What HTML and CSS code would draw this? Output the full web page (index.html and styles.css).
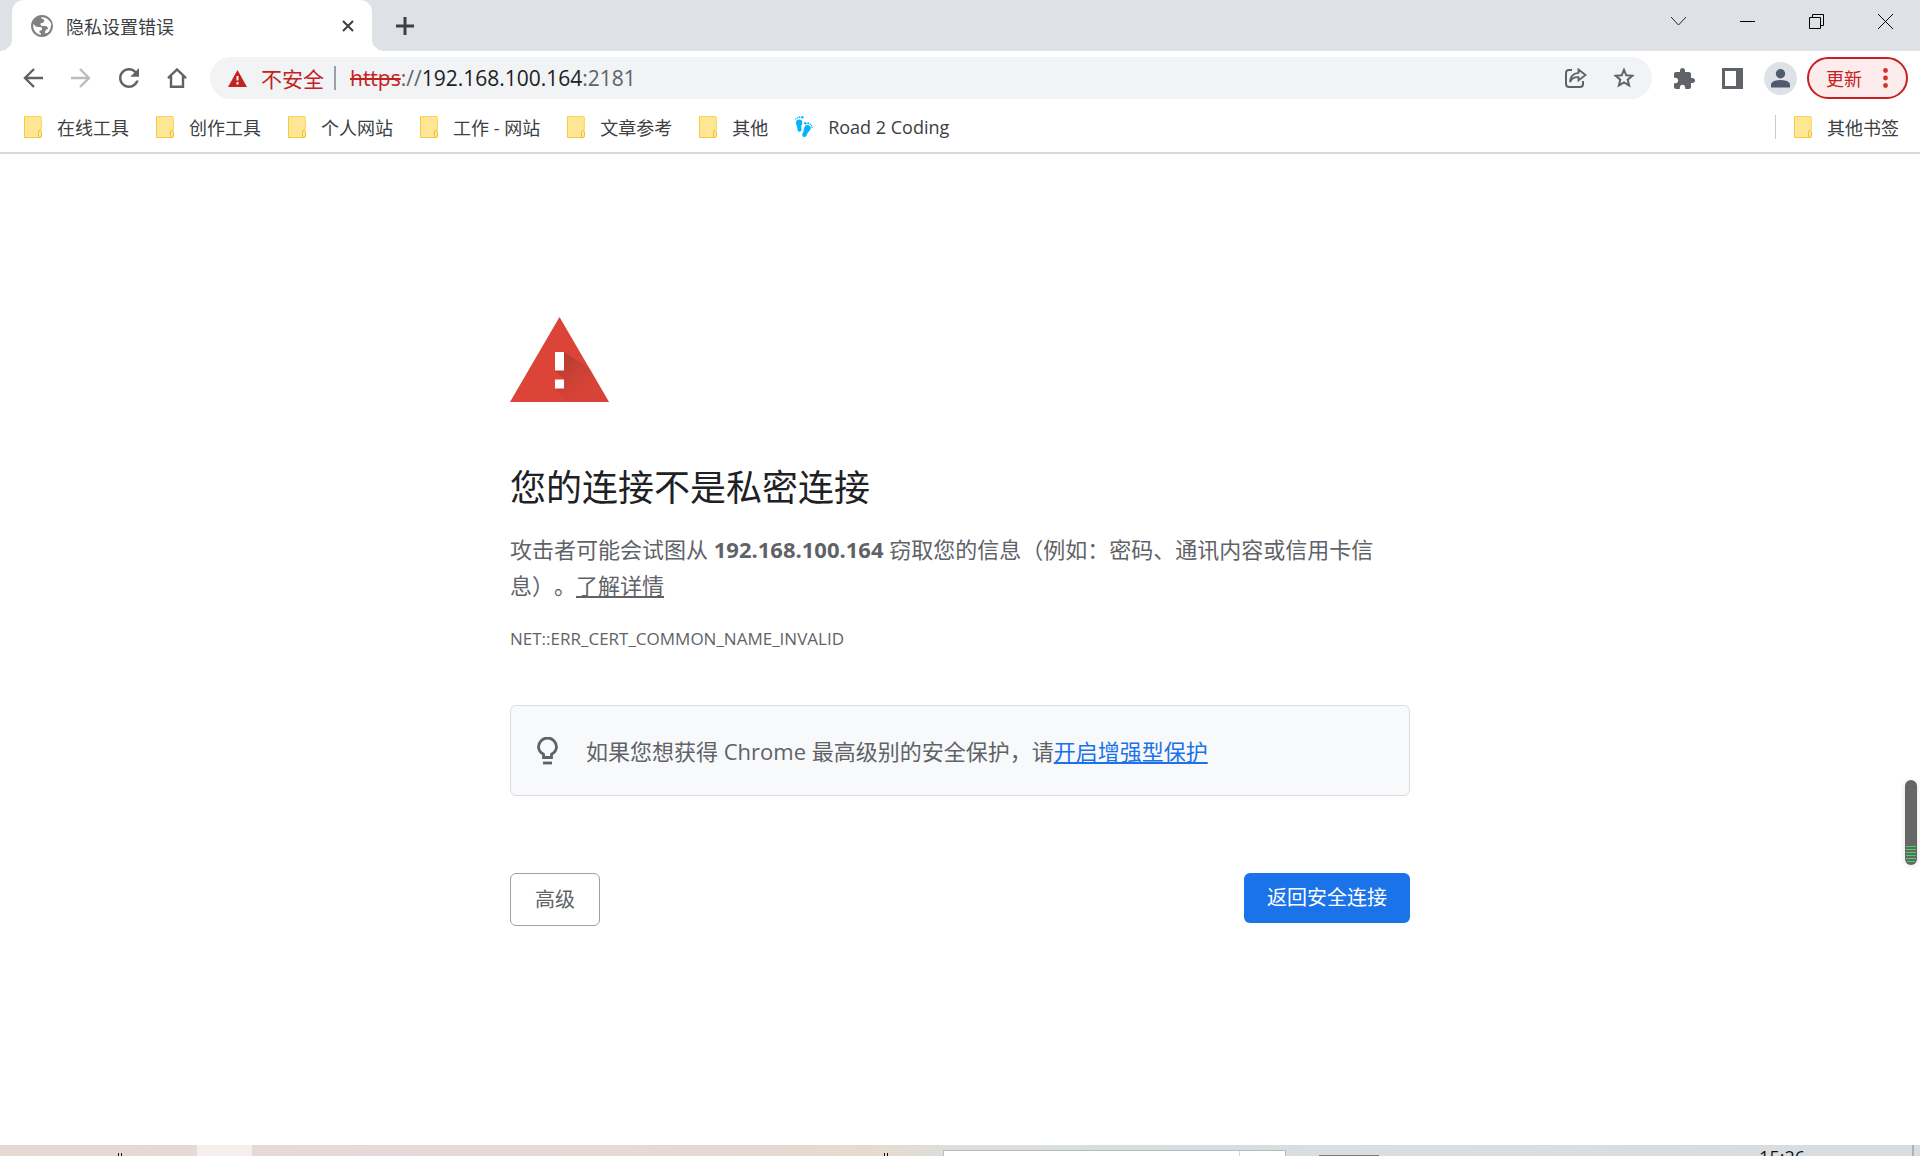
FILE: index.html
```html
<!DOCTYPE html>
<html lang="zh-CN">
<head>
    <meta charset="UTF-8">
    <meta name="viewport" content="width=device-width, initial-scale=1.0">
    <title>隐私设置错误</title>
    <link rel="stylesheet" href="styles.css">
</head>
<body>

    <!-- Shared icons -->
    <svg class="defs" aria-hidden="true">
        <symbol id="folder" viewBox="0 0 18 22">
            <path d="M.5 .5h16q.8 0 .8.8v12.4q-2.3.2-2.3 2.3v4.6q0 .9-1 .9H.5z" fill="#ffe694" stroke="#f8d554"/>
            <path d="M.5 1v20.5H16" fill="none" stroke="#f3cb45"/>
            <path d="M14.5 21.5v-5.2q0-1.8 1.5-1.8t1.5 1.8v3.7q0 1.5-1.5 1.5z" fill="#ffe694" stroke="#eec03a"/>
        </symbol>
    </svg>

    <!-- Tab Strip -->
    <header class="tab-strip">
        <div class="tab">
            <svg class="favicon" viewBox="2 2 20 20"><path fill="#808080" d="M12 2C6.48 2 2 6.48 2 12s4.48 10 10 10 10-4.48 10-10S17.52 2 12 2zm-1 17.93c-3.95-.49-7-3.85-7-7.93 0-.62.08-1.21.21-1.79L5.5 11.5Q6.5 13 9 13h1.5q1.5 0 1.5 1.500T11 16h-.5q-1 0-1 1.200T11 18.500zm6.900-2.540Q17 18.500 15 18.500q-1-.5 0-2t2.500-2q0-2-2-2.500H12q-1.500-.3-1.500-1.500T12 9h1q1.200-.5 1-2-.2-1.500-2-1.500l-1-1.400q4.500-.5 7.500 3T20 12c0 2.080-.8 3.970-2.100 5.390z"/></svg>
            <span class="tab-title">隐私设置错误</span>
            <button class="tab-close" aria-label="关闭标签页">
                <svg width="12" height="12" viewBox="0 0 12 12"><path d="M1 1l10 10M11 1L1 11" stroke="#3c4043" stroke-width="2"/></svg>
            </button>
        </div>
        <button class="new-tab" aria-label="新标签页">
            <svg width="18" height="18" viewBox="0 0 18 18"><path d="M9 0v18M0 9h18" stroke="#3c4043" stroke-width="3"/></svg>
        </button>
        <div class="window-controls">
            <button aria-label="搜索标签页"><svg width="15" height="15" viewBox="0 0 15 15"><path d="M0 3l7.500 8L15 3" fill="none" stroke="#222"/></svg></button>
            <button aria-label="最小化"><svg width="15" height="15" viewBox="0 0 15 15"><path d="M0 7.500h15" stroke="#000"/></svg></button>
            <button aria-label="还原"><svg width="15" height="15" viewBox="0 0 15 15"><path d="M.5 3.500h11v11H.5zM3.500 3.500v-3h11v11h-3" fill="none" stroke="#000"/></svg></button>
            <button aria-label="关闭"><svg width="15" height="15" viewBox="0 0 15 15"><path d="M0 0l15 15M15 0L0 15" stroke="#000"/></svg></button>
        </div>
    </header>

    <!-- Toolbar -->
    <nav class="toolbar">
        <button class="icon-btn" aria-label="返回"><svg width="20" height="20" viewBox="0 0 20 20"><path d="M20 10H2M11 1l-9 9 9 9" fill="none" stroke="#5f6368" stroke-width="2.400"/></svg></button>
        <button class="icon-btn" aria-label="前进"><svg width="20" height="20" viewBox="0 0 20 20"><path d="M0 10h18M9 1l9 9-9 9" fill="none" stroke="#babcbe" stroke-width="2.400"/></svg></button>
        <button class="icon-btn" aria-label="重新加载"><svg width="20" height="20" viewBox="4 4 16 16"><path fill="#5f6368" d="M17.650 6.350C16.200 4.900 14.210 4 12 4c-4.420 0-7.990 3.580-7.990 8s3.570 8 7.990 8c3.730 0 6.840-2.550 7.730-6h-2.080c-.82 2.330-3.040 4-5.650 4-3.310 0-6-2.690-6-6s2.690-6 6-6c1.660 0 3.140.69 4.220 1.780L13 11h7V4z"/></svg></button>
        <button class="icon-btn" aria-label="主页"><svg width="20" height="20" viewBox="0 0 20 20"><path d="M1 10.200L10 1.500l9 8.700M4 8v10.700h12V8" fill="none" stroke="#5f6368" stroke-width="2.400"/></svg></button>

        <div class="omnibox">
            <button class="security">
                <svg width="19" height="17" viewBox="0 0 19 17"><path fill="#c5221f" d="M9.500 0L19 17H0z"/><path d="M9.500 6v4.500M9.500 12v2.500" stroke="#f1f3f4" stroke-width="2"/></svg>
                不安全
            </button>
            <div class="url" role="textbox" aria-label="地址和搜索栏" tabindex="0"><s>https</s>://<b>192.168.100.164</b>:2181</div>
            <button class="icon-btn" aria-label="分享"><svg width="22" height="20" viewBox="0 0 22 20"><path d="M7 2H4Q1 2 1 5v11q0 3 3 3h11q3 0 3-3v-3" fill="none" stroke="#5f6368" stroke-width="2"/><path d="M13.500 1.500L20.500 7l-7 5.500V9.200Q7.500 8.700 5 14q.3-8.500 8.500-9.200z" fill="none" stroke="#5f6368" stroke-width="1.800"/></svg></button>
            <button class="icon-btn" aria-label="收藏"><svg width="22" height="22" viewBox="0 0 22 22"><path fill="none" stroke="#5f6368" stroke-width="2" d="M11 2.800l2.300 5.500 6 .5-4.600 3.900 1.400 5.800-5.100-3.100-5.100 3.100 1.400-5.800-4.600-3.900 6-.5z"/></svg></button>
        </div>

        <button class="icon-btn" aria-label="扩展程序"><svg width="21" height="21" viewBox="2 1 21 21"><path fill="#5f6368" d="M20.500 11H19V7c0-1.100-.9-2-2-2h-4V3.500C13 2.120 11.880 1 10.500 1S8 2.120 8 3.500V5H4c-1.100 0-1.990.9-1.990 2v3.800H3.500c1.490 0 2.700 1.210 2.700 2.700s-1.210 2.700-2.700 2.700H2V20c0 1.100.9 2 2 2h3.800v-1.500c0-1.490 1.210-2.700 2.700-2.700 1.490 0 2.700 1.210 2.700 2.700V22H17c1.100 0 2-.9 2-2v-4h1.500c1.380 0 2.500-1.120 2.500-2.500S21.880 11 20.500 11z"/></svg></button>
        <button class="icon-btn" aria-label="侧边栏"><svg width="21" height="21" viewBox="0 0 21 21"><path fill="#5f6368" fill-rule="evenodd" d="M0 0h21v21H0zM3 3v15h11V3z"/></svg></button>
        <button class="icon-btn" aria-label="个人资料"><svg width="33" height="33" viewBox="0 0 33 33"><circle cx="16.500" cy="16.500" r="16.500" fill="#dee1e6"/><circle cx="16.500" cy="11.800" r="4.700" fill="#4e5a6e"/><path d="M7 25.500v-2.500q0-3 4-4.200 5.500-1.600 11 0 4 1.200 4 4.200v2.500z" fill="#4e5a6e"/></svg></button>
        <button class="update">更新<svg width="5" height="20" viewBox="0 0 5 20"><g fill="#d93025"><circle cx="2.500" cy="2.500" r="2.400"/><circle cx="2.500" cy="10" r="2.400"/><circle cx="2.500" cy="17.500" r="2.400"/></g></svg></button>
    </nav>

    <!-- Bookmarks Bar -->
    <nav class="bookmarks">
        <a href="#"><svg><use href="#folder"/></svg>在线工具</a>
        <a href="#"><svg><use href="#folder"/></svg>创作工具</a>
        <a href="#"><svg><use href="#folder"/></svg>个人网站</a>
        <a href="#"><svg><use href="#folder"/></svg>工作 - 网站</a>
        <a href="#"><svg><use href="#folder"/></svg>文章参考</a>
        <a href="#"><svg><use href="#folder"/></svg>其他</a>
        <a href="#"><svg viewBox="0 0 18 22">
            <g fill="#03b4fd">
                <path d="M1 6.500Q1.200 3.800 4 3.600 7.200 3.500 7.300 6.300q0 1.700-.8 3.200-.5 1.500 0 3.500.2 2.700-1.900 2.800-2.300 0-2.200-2.800.1-1.500-.6-3Q1 8.200 1 6.500z"/>
                <path d="M9.300 11.500q.9-2.800 3.700-2.400 3.100.6 2.700 3.500-.4 1.900-2 3.200-1.300 1.100-1.800 3-.9 2.700-3 2.200-2.200-.6-1.500-3.200.9-1.600 1.300-3-.1-1.800.6-3.300z"/>
                <circle cx=".9" cy="3" r=".7"/><circle cx="2.500" cy="1.800" r=".7"/><circle cx="4.500" cy="1.100" r=".9"/><circle cx="7.300" cy="1.300" r="1.200"/>
                <circle cx="10.300" cy="7.300" r="1.200"/><circle cx="13.200" cy="7.200" r="1"/><circle cx="15.200" cy="8.300" r=".8"/><circle cx="16.500" cy="9.800" r=".7"/><circle cx="17" cy="11.500" r=".7"/>
            </g></svg>Road 2 Coding</a>
        <a href="#" class="other"><svg><use href="#folder"/></svg>其他书签</a>
    </nav>

    <!-- Interstitial Content -->
    <main class="content">
        <svg class="warning" width="99" height="85" viewBox="0 0 99 85">
            <defs>
                <linearGradient id="shade" x1="0" y1="0" x2="1" y2="1">
                    <stop offset="0" stop-color="#a93a30"/>
                    <stop offset=".7" stop-color="#cf4136" stop-opacity=".3"/>
                </linearGradient>
            </defs>
            <path fill="#db4437" d="M49.500 0L99 85H0z"/>
            <path fill="url(#shade)" d="M54 35l26 17 19 33H58L45 71l9-9-9-8z"/>
            <path fill="#fff" d="M45 35h9v18.500h-9zM45 62.500h9v9h-9z"/>
        </svg>
        <h1>您的连接不是私密连接</h1>
        <p>攻击者可能会试图从 <strong>192.168.100.164</strong> 窃取您的信息（例如：密码、通讯内容或信用卡信<br>息）。<a href="#">了解详情</a></p>
        <div class="error-code">NET::ERR_CERT_COMMON_NAME_INVALID</div>

        <div class="tip">
            <svg width="21" height="28" viewBox="0 0 21 28">
                <path d="M6.500 20.500v-3.300C3.500 15.500 1.500 13.300 1.500 10a9 9 0 0 1 18 0c0 3.300-2 5.500-5 7.200v3.300z" fill="none" stroke="#5f6368" stroke-width="2.800"/>
                <path d="M6 26h9" stroke="#5f6368" stroke-width="2.800"/>
            </svg>
            <span>如果您想获得 Chrome 最高级别的安全保护，请<a href="#">开启增强型保护</a></span>
        </div>

        <div class="actions">
            <button class="details">高级</button>
            <button class="primary">返回安全连接</button>
        </div>
    </main>

    <!-- Floating scroll handle -->
    <div class="scroll-handle"></div>

    <!-- Taskbar -->
    <footer class="taskbar">
        <span class="tick first"></span>
        <span class="active-app"></span>
        <span class="tick second"></span>
        <span class="search"><span class="search-go"></span></span>
        <span class="tray"></span>
        <time class="clock">15:26</time>
    </footer>

</body>
</html>
```

FILE: styles.css
```css
* {
    box-sizing: border-box;
}

body {
    margin: 0;
    min-height: 100vh;
    display: flex;
    flex-direction: column;
    position: relative;
    background-color: #fff;
    color: #3c4043;
    font-family: "Open Sans", "Noto Sans CJK SC", sans-serif;
    font-size: 18px;
    text-spacing-trim: space-all;
}

button {
    font: inherit;
    color: inherit;
    background: none;
    border: none;
    padding: 0;
    cursor: pointer;
}

svg {
    display: block;
    flex: none;
}

.defs {
    position: absolute;
    width: 0;
    height: 0;
}

/* Tab Strip */
.tab-strip {
    display: flex;
    height: 51px;
    padding-left: 12px;
    background-color: #dee1e6;
}

.tab {
    position: relative;
    display: flex;
    align-items: center;
    width: 360px;
    padding: 0 18px 0 19px;
    background-color: #fff;
    border-radius: 12px 12px 0 0;
}

/* Curved feet of the tab */
.tab::before,
.tab::after {
    content: "";
    position: absolute;
    bottom: 0;
    width: 12px;
    height: 12px;
}

.tab::before {
    right: 100%;
    background: radial-gradient(circle at 0 0, transparent 12px, #fff 12px);
}

.tab::after {
    left: 100%;
    background: radial-gradient(circle at 100% 0, transparent 12px, #fff 12px);
}

.favicon {
    width: 22px;
    height: 22px;
}

.tab-title {
    flex: 1;
    margin-left: 13px;
}

.new-tab {
    width: 66px;
}

.tab-close svg,
.new-tab svg,
.icon-btn svg,
.window-controls svg {
    margin: auto;
}

.window-controls {
    display: flex;
    height: 43px;
    margin-left: auto;
}

.window-controls button {
    width: 69px;
}

/* Toolbar */
.toolbar {
    display: flex;
    align-items: center;
    height: 54px;
    padding: 0 12px 0 9px;
}

.icon-btn {
    width: 48px;
    height: 42px;
}

.omnibox {
    flex: 1;
    display: flex;
    align-items: center;
    height: 42px;
    margin: 0 8px 0 9px;
    padding: 0 4px 0 18px;
    border-radius: 21px;
    background-color: #f1f3f4;
    font-size: 21px;
}

.security {
    display: flex;
    align-items: center;
    gap: 14px;
    height: 24px;
    padding-right: 10px;
    border-right: 2px solid #9aa0a6;
    color: #c5221f;
}

.url {
    flex: 1;
    padding-left: 14px;
    color: #5f6368;
}

.url s {
    color: #c5221f;
}

.url b {
    color: #202124;
    font-weight: normal;
}

.update {
    display: flex;
    align-items: center;
    justify-content: space-between;
    width: 101px;
    height: 42px;
    margin-left: 3px;
    padding: 0 18px 0 17px;
    border: 2px solid #c5221f;
    border-radius: 21px;
    background-color: #fcecec;
    color: #c5221f;
}

/* Bookmarks Bar */
.bookmarks {
    display: flex;
    align-items: center;
    gap: 27px;
    height: 49px;
    padding: 0 21px 4px 24px;
    border-bottom: 2px solid #dadada;
}

.bookmarks a {
    display: flex;
    align-items: center;
    gap: 15px;
    height: 24px;
    color: #3c4043;
    text-decoration: none;
    white-space: nowrap;
}

.bookmarks svg {
    width: 18px;
    height: 22px;
}

.bookmarks .other {
    margin-left: auto;
    padding-left: 18px;
    border-left: 1px solid #c8cacd;
}

/* Interstitial Content */
.content {
    flex: 1;
    width: 100%;
    max-width: 900px;
    margin: 0 auto;
    padding-top: 163px;
    color: #5f6368;
    font-size: 22px;
    line-height: 36px;
}

h1 {
    margin: 62px 0 19px;
    color: #202124;
    font-size: 36px;
    font-weight: normal;
    line-height: 48px;
}

p {
    margin: 0;
}

p a {
    color: #5f6368;
}

.error-code {
    margin-top: 18px;
    font-size: 17px;
}

.tip {
    display: flex;
    align-items: center;
    gap: 28px;
    margin-top: 48px;
    padding: 27px 26px 26px;
    border: 1px solid #dadce0;
    border-radius: 6px;
    background-color: #f8f9fa;
}

.tip a {
    color: #1a73e8;
}

.actions {
    display: flex;
    align-items: flex-start;
    justify-content: space-between;
    margin-top: 77px;
    font-size: 20px;
}

.details {
    padding: 0 24px;
    height: 53px;
    border: 1px solid #9aa0a6;
    border-radius: 6px;
}

.primary {
    padding: 0 23px;
    height: 50px;
    border-radius: 6px;
    background-color: #1a73e8;
    color: #fff;
}

/* Scroll handle that floats over the page */
.scroll-handle {
    position: absolute;
    top: 780px;
    right: 3px;
    width: 12px;
    height: 85px;
    padding: 66px 1px 2px;
    border-radius: 6px;
    background: repeating-linear-gradient(#3fd95c 0 1px, #666 1px 3px) content-box, #666;
    box-shadow: 0 1px 5px #ddd;
}

/* Taskbar */
.taskbar {
    display: flex;
    height: 11px;
    overflow: hidden;
    background: linear-gradient(90deg, #e6d8d3, #e7d9d9 20%, #e6d9d4 40%, #e7dacd 45%, #dcdedd 50%, #d5dee1 63%, #dadee0 70%, #dadddf);
    border-right: 6px solid #dadddf;
}

.tick {
    width: 4px;
    height: 3px;
    margin-top: 8px;
    border: solid #111;
    border-width: 0 1px;
}

.first {
    margin-left: 118px;
}

.active-app {
    width: 55px;
    margin-left: 75px;
    background-color: #f4eeed;
}

.second {
    margin-left: 632px;
}

.search {
    width: 343px;
    margin: 5px 0 0 55px;
    border: 1px solid #b8babb;
    border-bottom: none;
    background-color: #fff;
}

.search-go {
    display: block;
    width: 46px;
    height: 6px;
    margin-left: auto;
    border-left: 1px solid #d5d7d8;
}

.tray {
    width: 60px;
    height: 1px;
    margin: 10px 0 0 33px;
    background-color: #777;
}

.clock {
    margin-left: auto;
    padding-right: 107px;
    border-right: 2px solid #afb3b5;
    color: #111;
    line-height: 25px;
}
```
